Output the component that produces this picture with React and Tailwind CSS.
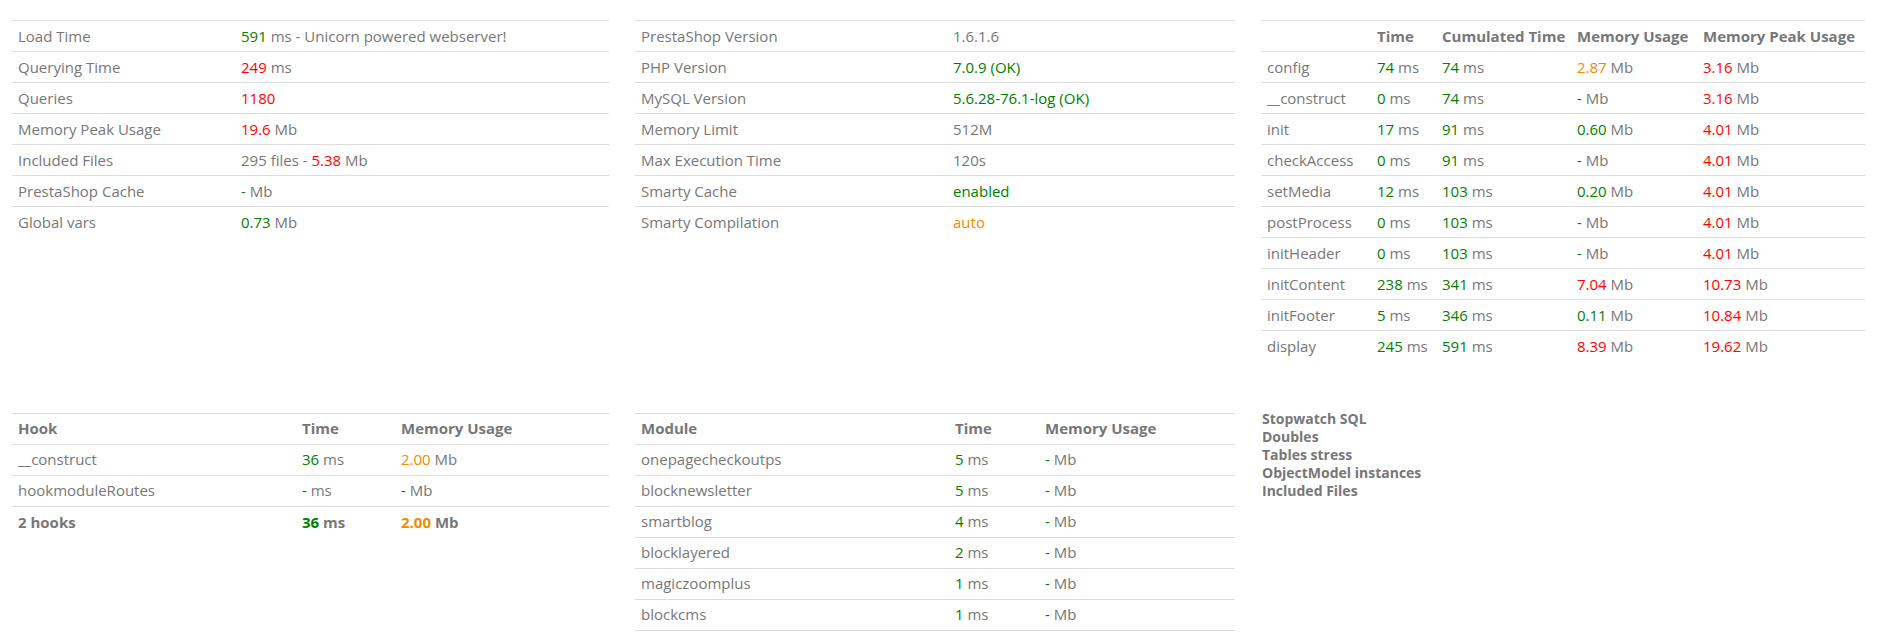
const G = 'text-[#008000]';
const R = 'text-[#ff0000]';
const O = 'text-[#ef8b00]';

const Val = ({ n, c, unit }) => (
    <>
        <span className={c}>{n}</span> {unit}
    </>
);

const cell = 'h-[31px] border-t border-[#dddddd] px-[6px] align-middle text-left whitespace-nowrap';

const summary = [
    ['Load Time', <><Val n="591" c={G} unit="ms" /> - Unicorn powered webserver!</>],
    ['Querying Time', <Val n="249" c={R} unit="ms" />],
    ['Queries', <span className={R}>1180</span>],
    ['Memory Peak Usage', <Val n="19.6" c={R} unit="Mb" />],
    ['Included Files', <>295 files - <Val n="5.38" c={R} unit="Mb" /></>],
    ['PrestaShop Cache', <Val n="-" c={G} unit="Mb" />],
    ['Global vars', <Val n="0.73" c={G} unit="Mb" />],
];

const config = [
    ['PrestaShop Version', '1.6.1.6'],
    ['PHP Version', <span className={G}>7.0.9 (OK)</span>],
    ['MySQL Version', <span className={G}>5.6.28-76.1-log (OK)</span>],
    ['Memory Limit', '512M'],
    ['Max Execution Time', '120s'],
    ['Smarty Cache', <span className={G}>enabled</span>],
    ['Smarty Compilation', <span className={O}>auto</span>],
];

// name, time, cumulated, memory [value, color], peak [value, color]
const steps = [
    ['config', '74', '74', ['2.87', O], ['3.16', R]],
    ['__construct', '0', '74', ['-', G], ['3.16', R]],
    ['init', '17', '91', ['0.60', G], ['4.01', R]],
    ['checkAccess', '0', '91', ['-', G], ['4.01', R]],
    ['setMedia', '12', '103', ['0.20', G], ['4.01', R]],
    ['postProcess', '0', '103', ['-', G], ['4.01', R]],
    ['initHeader', '0', '103', ['-', G], ['4.01', R]],
    ['initContent', '238', '341', ['7.04', R], ['10.73', R]],
    ['initFooter', '5', '346', ['0.11', G], ['10.84', R]],
    ['display', '245', '591', ['8.39', R], ['19.62', R]],
];

const modules = [
    ['onepagecheckoutps', '5'],
    ['blocknewsletter', '5'],
    ['smartblog', '4'],
    ['blocklayered', '2'],
    ['magiczoomplus', '1'],
    ['blockcms', '1'],
];

const KeyValueTable = ({ rows, keyWidth }) => (
    <table className="w-full table-fixed">
        <colgroup>
            <col className={keyWidth} />
            <col />
        </colgroup>
        <tbody>
            {rows.map(([k, v]) => (
                <tr key={k}>
                    <td className={cell}>{k}</td>
                    <td className={cell}>{v}</td>
                </tr>
            ))}
        </tbody>
    </table>
);

const App = () => {
    return (
        <div
            className="min-h-[635px] bg-white pt-[20px] pl-[12px] text-[15px] text-[#777777]"
            style={{ fontFamily: '"Open Sans", "Liberation Sans", sans-serif' }}
        >
            <div className="grid grid-cols-[597px_600px_604px] gap-x-[26px] items-start">
                <KeyValueTable rows={summary} keyWidth="w-[223px]" />
                <KeyValueTable rows={config} keyWidth="w-[312px]" />

                <table className="w-full table-fixed">
                    <colgroup>
                        <col className="w-[110px]" />
                        <col className="w-[65px]" />
                        <col className="w-[135px]" />
                        <col className="w-[126px]" />
                        <col />
                    </colgroup>
                    <thead>
                        <tr className="font-bold">
                            <th className={cell}></th>
                            <th className={cell}>Time</th>
                            <th className={cell}>Cumulated Time</th>
                            <th className={cell}>Memory Usage</th>
                            <th className={cell}>Memory Peak Usage</th>
                        </tr>
                    </thead>
                    <tbody>
                        {steps.map(([name, time, cum, mem, peak]) => (
                            <tr key={name}>
                                <td className={cell}>{name}</td>
                                <td className={cell}><Val n={time} c={G} unit="ms" /></td>
                                <td className={cell}><Val n={cum} c={G} unit="ms" /></td>
                                <td className={cell}><Val n={mem[0]} c={mem[1]} unit="Mb" /></td>
                                <td className={cell}><Val n={peak[0]} c={peak[1]} unit="Mb" /></td>
                            </tr>
                        ))}
                    </tbody>
                </table>
            </div>

            <div className="mt-[51px] grid grid-cols-[597px_600px_604px] gap-x-[26px] items-start">
                {/* Hooks */}
                <table className="w-full table-fixed">
                    <colgroup>
                        <col className="w-[284px]" />
                        <col className="w-[99px]" />
                        <col />
                    </colgroup>
                    <thead>
                        <tr className="font-bold">
                            <th className={cell}>Hook</th>
                            <th className={cell}>Time</th>
                            <th className={cell}>Memory Usage</th>
                        </tr>
                    </thead>
                    <tbody>
                        <tr>
                            <td className={cell}>__construct</td>
                            <td className={cell}><Val n="36" c={G} unit="ms" /></td>
                            <td className={cell}><Val n="2.00" c={O} unit="Mb" /></td>
                        </tr>
                        <tr>
                            <td className={cell}>hookmoduleRoutes</td>
                            <td className={cell}><Val n="-" c={G} unit="ms" /></td>
                            <td className={cell}><Val n="-" c={G} unit="Mb" /></td>
                        </tr>
                        <tr className="font-bold">
                            <td className={cell}>2 hooks</td>
                            <td className={cell}><Val n="36" c={G} unit="ms" /></td>
                            <td className={cell}><Val n="2.00" c={O} unit="Mb" /></td>
                        </tr>
                    </tbody>
                </table>

                {/* Modules */}
                <table className="w-full table-fixed border-b border-[#dddddd]">
                    <colgroup>
                        <col className="w-[314px]" />
                        <col className="w-[90px]" />
                        <col />
                    </colgroup>
                    <thead>
                        <tr className="font-bold">
                            <th className={cell}>Module</th>
                            <th className={cell}>Time</th>
                            <th className={cell}>Memory Usage</th>
                        </tr>
                    </thead>
                    <tbody>
                        {modules.map(([name, time]) => (
                            <tr key={name}>
                                <td className={cell}>{name}</td>
                                <td className={cell}><Val n={time} c={G} unit="ms" /></td>
                                <td className={cell}><Val n="-" c={G} unit="Mb" /></td>
                            </tr>
                        ))}
                    </tbody>
                </table>

                <ul className="-mt-[3px] pl-[1px] text-[14px] font-bold leading-[18px]">
                    <li>Stopwatch SQL</li>
                    <li>Doubles</li>
                    <li>Tables stress</li>
                    <li>ObjectModel instances</li>
                    <li>Included Files</li>
                </ul>
            </div>
        </div>
    );
};

export default App;
